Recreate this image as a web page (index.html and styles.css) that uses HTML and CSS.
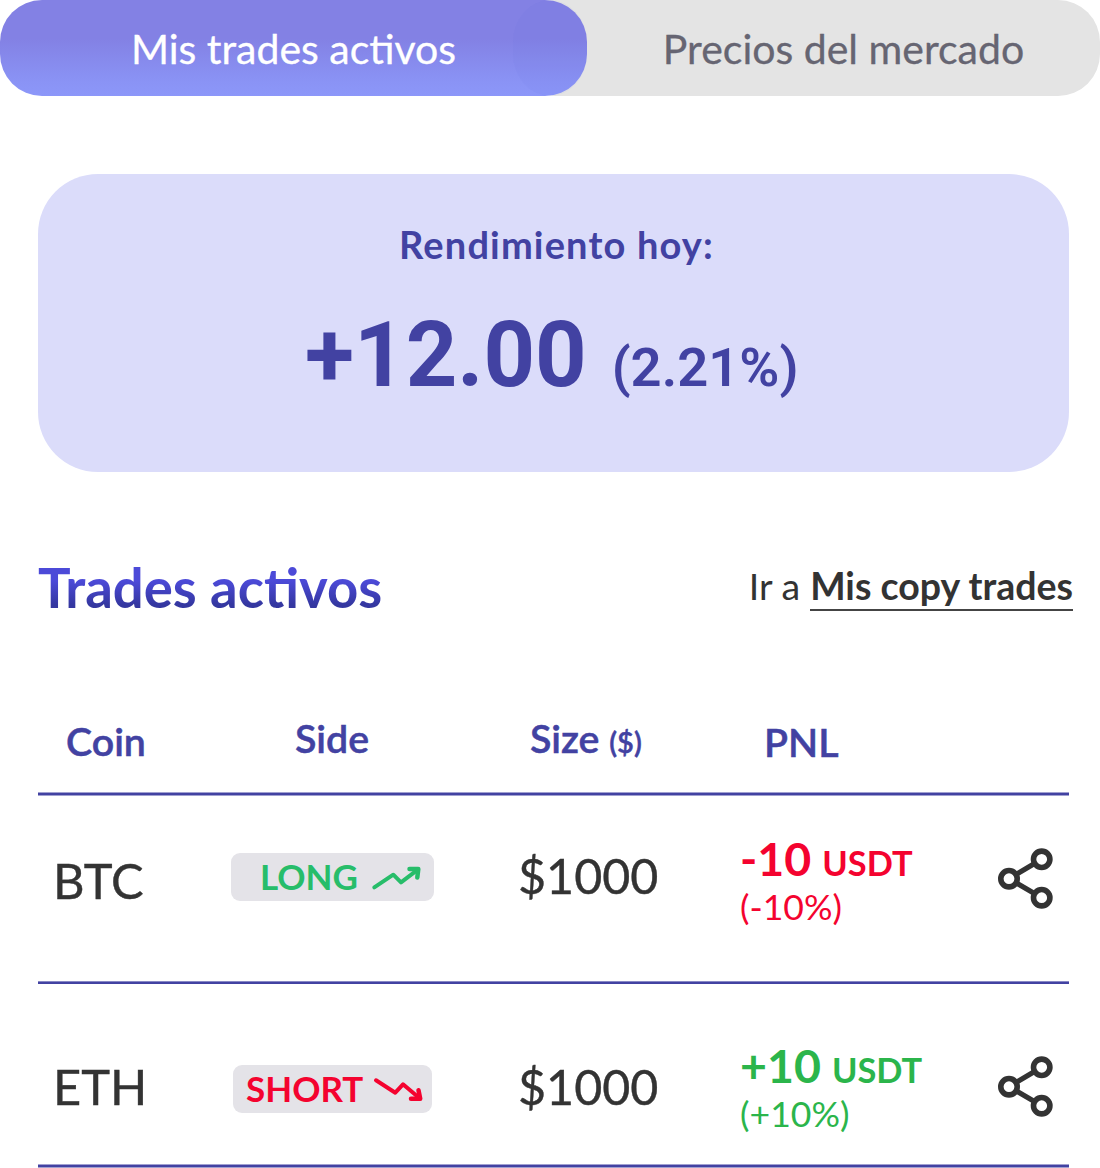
FILE: index.html
```html
<!DOCTYPE html>
<html lang="es">
<head>
<meta charset="utf-8">
<title>Mis trades activos</title>
<link rel="stylesheet" href="styles.css">
</head>
<body>
<svg class="sprite" aria-hidden="true">
  <symbol id="share" viewBox="0 0 56 62">
    <path d="M43.7 11.3 11 30.7l32.7 19" fill="none" stroke="#333" stroke-width="5.2"/>
    <g fill="#fff" stroke="#333" stroke-width="5.6"><circle cx="43.7" cy="11.3" r="8.2"/><circle cx="11" cy="30.7" r="8.2"/><circle cx="43.7" cy="49.7" r="8.2"/></g>
  </symbol>
</svg>
<nav class="tabs">
  <a class="tab tab-active"><span>Mis trades activos</span></a>
  <a class="tab tab-market"><span>Precios del mercado</span></a>
</nav>
<main class="content">
  <section class="summary">
    <h2 class="summary-title">Rendimiento hoy:</h2>
    <p class="summary-value"><span class="amount">+12.00</span><span class="percent">(2.21%)</span></p>
  </section>
  <header class="heading">
    <h1 class="title">Trades activos</h1>
    <p class="goto"><span class="goto-pre">Ir a</span><a class="goto-link">Mis copy trades</a></p>
  </header>
  <section class="table">
    <div class="row row-head">
      <span class="th th-coin">Coin</span>
      <span class="th th-side">Side</span>
      <span class="th th-size">Size <small class="unit">($)</small></span>
      <span class="th th-pnl">PNL</span>
    </div>
    <hr class="rule">
    <div class="row row-btc">
      <span class="coin">BTC</span>
      <span class="badge long"><span class="word">LONG</span>
        <svg class="trend" width="52" height="28" viewBox="0 0 52 28"><path d="M3.3 23.3 22.3 10.7 30 18.3 46.5 5.8" /><path class="tip" d="M38.5 4.9 47.3 4.9 46.3 13.5"/></svg>
      </span>
      <span class="size">$1000</span>
      <div class="pnl down"><p class="gain"><b class="num">-10</b><span class="cur">USDT</span></p><p class="rate">(-10%)</p></div>
      <svg class="share" width="56" height="62"><use href="#share"/></svg>
    </div>
    <hr class="rule rule-thin">
    <div class="row row-eth">
      <span class="coin">ETH</span>
      <span class="badge short"><span class="word">SHORT</span>
        <svg class="trend" width="52" height="28" viewBox="0 0 52 28"><path d="M4 4.3 23.3 16.7 31 8.3 47 21.8"/><path class="tip" d="M39 22.7 48.2 22.7 46.5 14.2"/></svg>
      </span>
      <span class="size">$1000</span>
      <div class="pnl up"><p class="gain"><b class="num">+10</b><span class="cur">USDT</span></p><p class="rate">(+10%)</p></div>
      <svg class="share" width="56" height="62"><use href="#share"/></svg>
    </div>
    <hr class="rule">
  </section>
</main>
</body>
</html>
```

FILE: styles.css
```css
* { box-sizing: border-box; }
body { margin: 0; background: #fff; color: #333; font-family: Lato, sans-serif; white-space: nowrap; }
h1, h2, p { margin: 0; }
.sprite { display: none; }

.tabs { display: flex; width: 1100px; height: 96px; }
.tab { display: flex; justify-content: center; width: 587px; height: 96px; padding-top: 20px; border-radius: 42px; font-size: 41px; line-height: 58px; -webkit-text-stroke: 0.3px; }
.tab-active { position: relative; background: linear-gradient(#8381e4 0%, #8381e4 40%, #8a93f5 85%, #8c97f9 100%); color: #fff; z-index: 1; }
.tab-active::after { content: ""; position: absolute; top: 0; right: 0; width: 74px; height: 96px; border-radius: 37px / 42px; background: rgba(70, 90, 200, 0.045); }
.tab-market { margin-left: -74px; padding-left: 74px; background: #e4e4e4; color: #666572; }

.content { padding: 78px 31px 0 38px; }
.summary { height: 298px; border-radius: 60px; background: #dbdcfa; color: #4242a2; padding-top: 46px; text-align: center; }
.summary-title { font-size: 38px; font-weight: 700; line-height: 48px; letter-spacing: 1.15px; padding-left: 6px; }
.summary-value { display: flex; align-items: baseline; font-family: Roboto, sans-serif; padding: 33px 0 0 267px; line-height: 110px; }
.amount { font-size: 90px; font-weight: 700; }
.percent { font-size: 54.4px; font-weight: 600; margin-left: 25px; }

.heading { display: flex; justify-content: space-between; height: 228px; padding-top: 80px; margin-right: -4px; }
.title { font-size: 54.5px; line-height: 70px; font-weight: 700; background: linear-gradient(#4c4ad8 36%, #3437a0 66%); background-clip: text; -webkit-background-clip: text; color: transparent; height: 80px; }
.goto { display: flex; font-size: 37.5px; line-height: 50px; padding-top: 9px; gap: 10px; }
.goto-link { font-weight: 700; height: 50px; border-bottom: 2px solid #444; }

.row { display: grid; grid-template-columns: 193px 289px 220px 258px 56px; align-items: start; }
.row-head { height: 92px; color: #4242a2; }
.row-btc { height: 185px; }
.row-eth { height: 180px; }
.rule { margin: 0; border: 0; height: 4px; background: linear-gradient(#4242a280 1px, #4242a2 1px 3px, #4242a280 3px); }
.rule-thin { height: 3px; background: linear-gradient(#4242a2a0 1px, #4242a2 1px); }

.th { font-size: 39.3px; line-height: 48px; font-weight: 600; -webkit-text-stroke: 0.5px; }
.th-coin { margin: 17px 0 0 28px; }
.th-side { margin: 14px 0 0 64px; }
.th-size { margin: 14px 0 0 10px; }
.th-pnl { margin: 18px 0 0 24px; }
.unit { font-size: 29px; }

.coin { font-size: 48.8px; line-height: 60px; margin: 54px 0 0 15px; -webkit-text-stroke: 0.4px; }
.size { font-size: 48.4px; line-height: 60px; margin: 49px 0 0 -2px; -webkit-text-stroke: 0.4px; }
.row-eth .coin { margin-top: 72px; }
.row-eth .size { margin-top: 72px; }

.badge { display: flex; height: 48px; border-radius: 9px; background: #e4e3e8; font-size: 35px; line-height: 46px; font-weight: 700; }
.long { width: 203px; margin-top: 57px; padding-left: 29px; color: #27bd6a; }
.short { width: 199px; margin: 81px 0 0 2px; padding-left: 13px; color: #f4032f; }
.trend { fill: none; stroke: currentColor; stroke-width: 4; stroke-linecap: round; stroke-linejoin: round; margin: 11px 0 0 auto; }
.long .trend { margin-right: 11px; }
.short .trend { margin-right: 8px; }
.tip { stroke-width: 4.5; }

.pnl { margin-top: 35px; }
.row-eth .pnl { margin-top: 54px; }
.down { color: #f4032f; }
.up { color: #2bb54b; }
.gain { display: flex; align-items: baseline; height: 54px; line-height: 54px; gap: 11px; }
.num { font-size: 46.5px; }
.cur { font-size: 34.4px; font-weight: 700; }
.rate { font-size: 35.6px; line-height: 44px; }
.share { margin-top: 52px; }
.row-eth .share { margin-top: 71.5px; }
```
